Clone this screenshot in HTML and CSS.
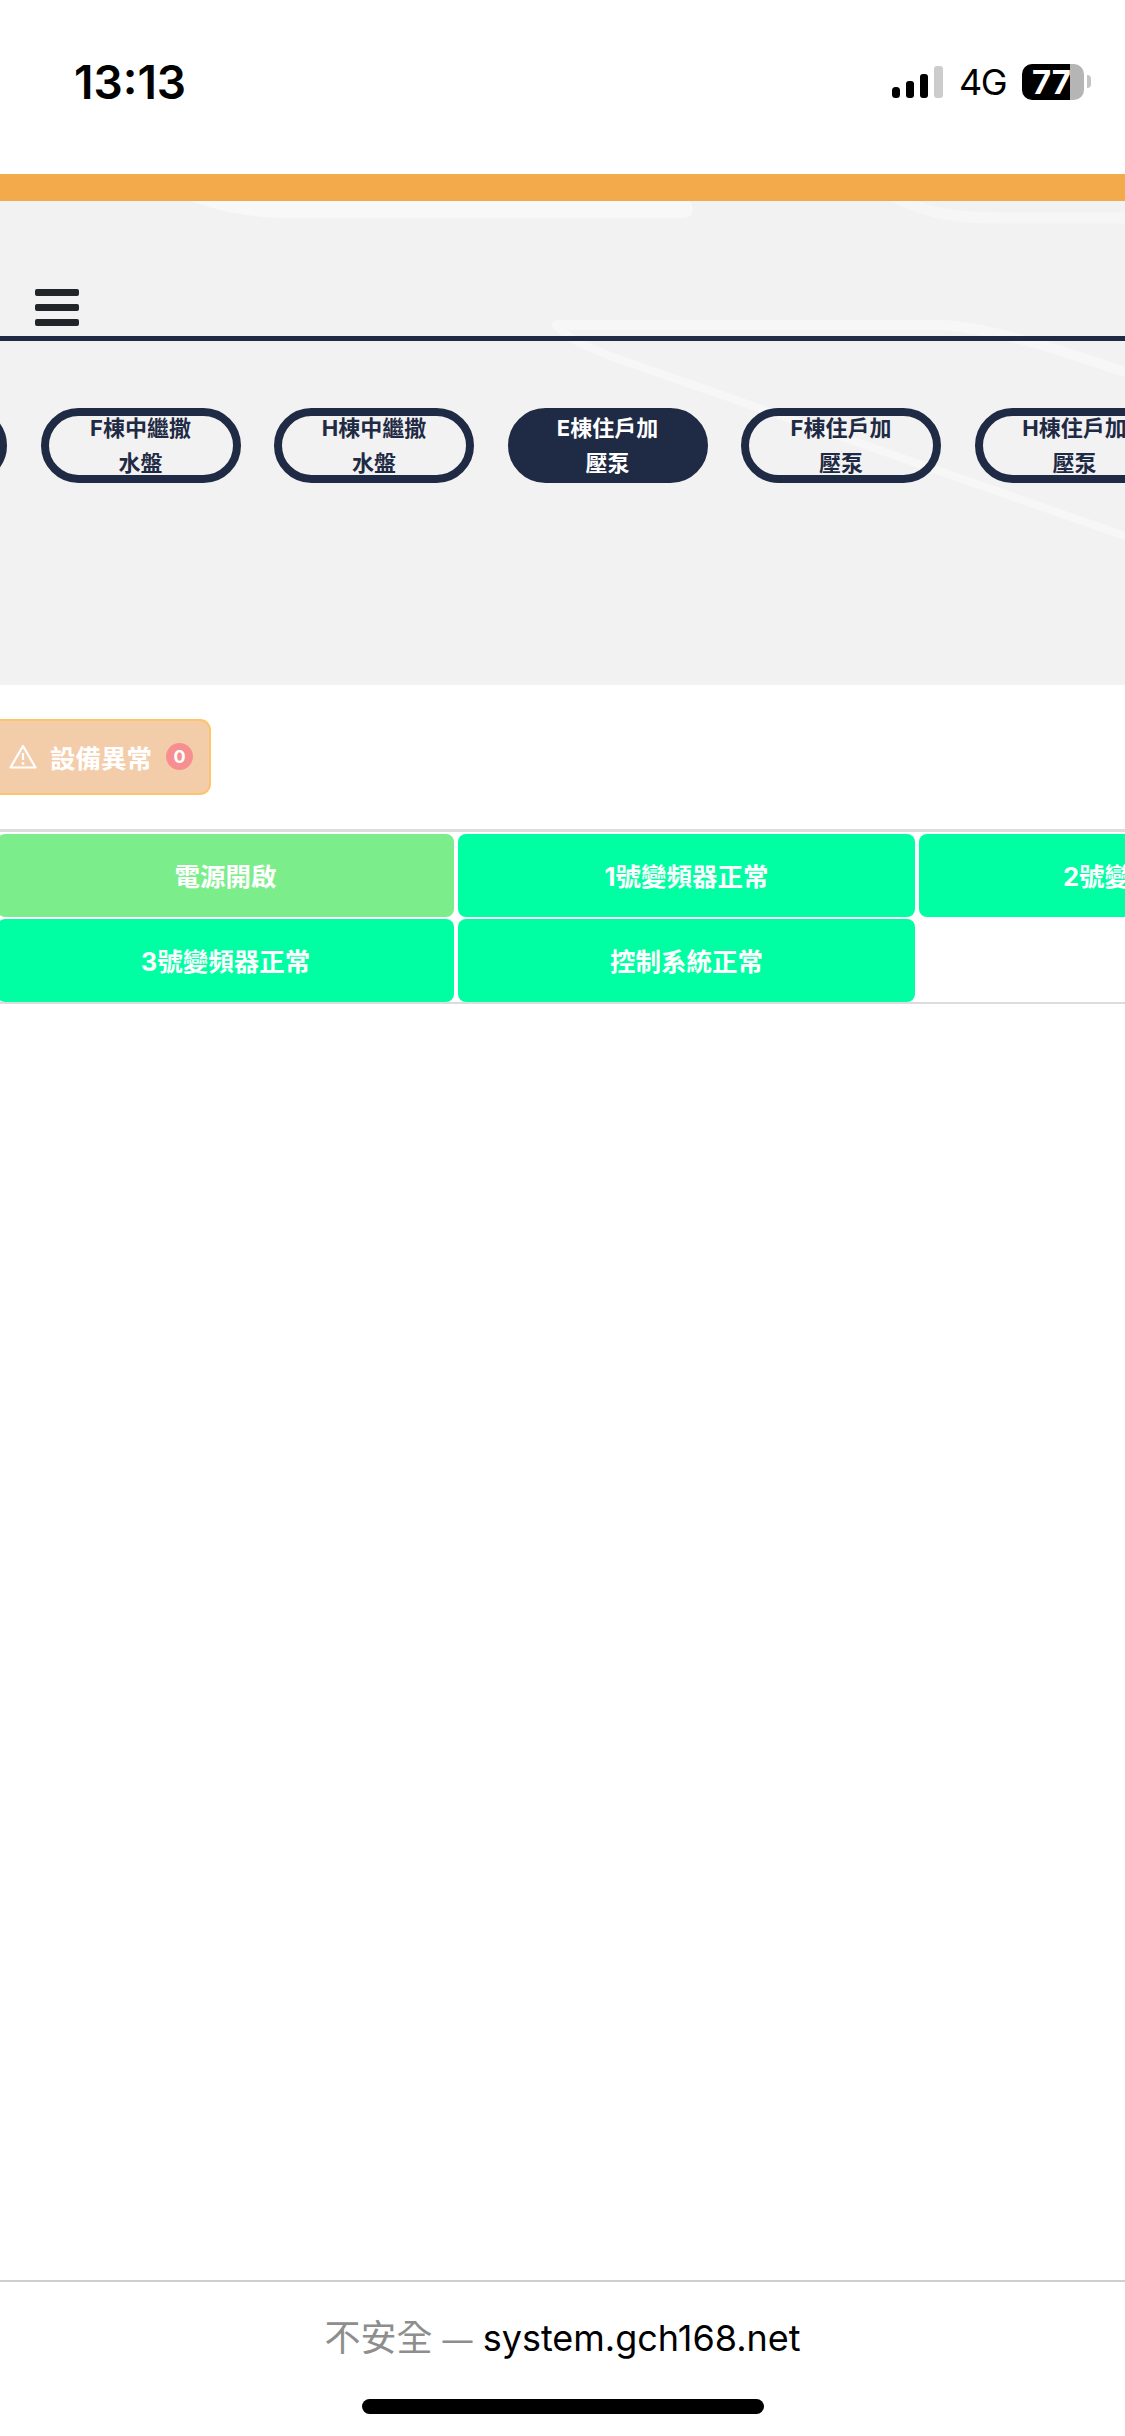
FILE: index.html
```html
<!DOCTYPE html>
<html>
<head>
  <title>設備狀態</title>
  <link rel="stylesheet" href="styles.css">
</head>
<body>
  <div class="status-bar">
    <span class="status-time">13:13</span>
    <div class="status-right">
      <svg class="signal" width="51" height="32" viewBox="0 0 51 32">
        <rect x="0" y="21" width="8" height="11" rx="3.5" fill="#000"/>
        <rect x="14" y="15" width="8" height="17" rx="3" fill="#000"/>
        <rect x="28" y="8" width="8" height="24" rx="3" fill="#000"/>
        <rect x="42" y="0" width="9" height="32" rx="3" fill="#ccc"/>
      </svg>
      <span class="status-net">4G</span>
      <div class="battery">77</div>
    </div>
  </div>

  <div class="orange-bar"></div>

  <div class="top-section">
    <!-- light lines behind the menu -->
    <svg class="top-lines" viewBox="0 201 1125 484" width="1125" height="484">
      <path d="M190 201 C230 215 262 218 292 218 H680 Q696 218 692 206 L690 201 Z" fill="#f8f8f8"/>
      <path d="M895 197 C930 215 960 218 1000 218 H1125" fill="none" stroke="#f6f6f6" stroke-width="11"/>
      <path d="M557 325 H945 C1000 330 1060 350 1125 372" fill="none" stroke="#f7f7f7" stroke-width="10" stroke-linecap="round"/>
      <path d="M557 325 C570 342 590 347 610 356 L1125 536" fill="none" stroke="#f7f7f7" stroke-width="8" stroke-linecap="round"/>
    </svg>

    <div class="nav">
      <div class="menu-btn">
        <span></span>
        <span></span>
        <span></span>
      </div>
    </div>

    <div class="tabs">
      <div class="tab">E棟中繼撒水盤</div>
      <div class="tab">F棟中繼撒水盤</div>
      <div class="tab">H棟中繼撒水盤</div>
      <div class="tab tab-active">E棟住戶加壓泵</div>
      <div class="tab">F棟住戶加壓泵</div>
      <div class="tab">H棟住戶加壓泵</div>
    </div>
  </div>

  <div class="main">
    <div class="alert">
      <svg class="alert-icon" width="28" height="25" viewBox="0 0 28 25">
        <path d="M14 2 L26.5 23.5 H1.5 Z" fill="none" stroke="#fff" stroke-width="2.2" stroke-linejoin="round"/>
        <path d="M14 9 V16" stroke="#fff" stroke-width="2.2"/>
        <circle cx="14" cy="19.5" r="1.4" fill="#fff"/>
      </svg>
      <span class="alert-text">設備異常</span>
      <span class="alert-count">0</span>
    </div>

    <div class="state-table">
      <div class="state-cell state-power">電源開啟</div>
      <div class="state-cell">1號變頻器正常</div>
      <div class="state-cell">2號變頻器正常</div>
      <div class="state-cell">3號變頻器正常</div>
      <div class="state-cell">控制系統正常</div>
    </div>
  </div>

  <div class="url-bar">
    <div class="url-text"><span class="url-warn">不安全 <span class="url-dash">—</span> </span>system.gch168.net</div>
    <div class="home-line"></div>
  </div>
</body>
</html>
```

FILE: styles.css
```css
* {
  box-sizing: border-box;
}

html, body {
  margin: 0;
  padding: 0;
}

body {
  width: 1125px;
  height: 2436px;
  overflow: hidden;
  display: flex;
  flex-direction: column;
  background-color: #fff;
  font-family: Inter, "Noto Sans CJK TC", sans-serif;
}

/* phone status bar */
.status-bar {
  height: 174px;
  flex-shrink: 0;
  padding: 0 41px 10px 74px;
  display: flex;
  align-items: center;
  justify-content: space-between;
  color: #000;
}

.status-time {
  font-size: 46px;
  font-weight: 600;
}

.status-right {
  display: flex;
  align-items: center;
}

.status-net {
  font-size: 36px;
  letter-spacing: -1.5px;
  margin-left: 16px;
  line-height: 36px;
}

.battery {
  position: relative;
  width: 62px;
  height: 36px;
  margin-left: 16px;
  border-radius: 10px;
  background: linear-gradient(90deg, #000 48px, #b5b5b5 48px);
  color: #fff;
  font-size: 33px;
  font-weight: 700;
  line-height: 36px;
  padding-left: 10px;
  white-space: nowrap;
}

.battery::after {
  content: "";
  position: absolute;
  left: 65px;
  top: 11px;
  width: 4px;
  height: 13px;
  border-radius: 0 6px 6px 0;
  background-color: #c4c4c4;
}

.orange-bar {
  height: 27px;
  flex-shrink: 0;
  background-color: #f3aa4b;
}

/* grey section with menu and tabs */
.top-section {
  position: relative;
  height: 484px;
  flex-shrink: 0;
  overflow: hidden;
  background-color: #f2f2f2;
}

.top-lines {
  position: absolute;
  left: 0;
  top: 0;
}

.nav {
  position: relative;
  padding: 88px 0 10px 35px;
  border-bottom: 5px solid #1f2a44;
}

.menu-btn {
  display: flex;
  flex-direction: column;
  gap: 8px;
}

.menu-btn span {
  width: 44px;
  height: 7px;
  border-radius: 2px;
  background-color: #212529;
}

.tabs {
  position: relative;
  display: flex;
  gap: 33.5px;
  margin: 67px 0 0 -193px;
}

.tab {
  width: 200px;
  height: 75px;
  flex-shrink: 0;
  padding: 0 38px;
  border: 8px solid #1f2a44;
  border-radius: 38px;
  display: flex;
  align-items: center;
  justify-content: center;
  text-align: center;
  color: #1f2a44;
  font-size: 22px;
  font-weight: 700;
  line-height: 35px;
}

.tab-active {
  background-color: #1f2a44;
  color: #fff;
}

.main {
  flex: 1;
  overflow: hidden;
}

.alert {
  width: 211px;
  height: 76px;
  margin-top: 34px;
  padding: 0 0 2px 9px;
  display: flex;
  align-items: center;
  background-color: #f3cda9;
  border: 2px solid #fdc56b;
  border-left: none;
  border-radius: 0 11px 11px 0;
  color: #fff;
}

.alert-text {
  margin-left: 13px;
  font-size: 25.5px;
  font-weight: 700;
}

.alert-count {
  width: 27px;
  height: 27px;
  margin-left: 14px;
  border-radius: 50%;
  background-color: #f78f91;
  font-size: 18px;
  font-weight: 700;
  line-height: 27px;
  text-align: center;
}

/* device state cells, 3 per row */
.state-table {
  width: 1400px;
  margin: 34px 0 0 -3px;
  padding-top: 2px;
  display: grid;
  grid-template-columns: repeat(3, 457px);
  grid-auto-rows: 83px;
  gap: 2px 4px;
  border-top: 3px solid #dcdcdc;
  border-bottom: 2px solid #dcdcdc;
}

.state-cell {
  display: flex;
  align-items: center;
  justify-content: center;
  padding-bottom: 2px;
  border-radius: 8px;
  background-color: #00ffa3;
  color: #fff;
  font-size: 25.5px;
  font-weight: 700;
}

.state-power {
  background-color: #7ced8b;
}

/* browser address bar */
.url-bar {
  height: 156px;
  flex-shrink: 0;
  border-top: 2px solid #cfcfcf;
  display: flex;
  flex-direction: column;
  align-items: center;
}

.url-text {
  margin-top: 34px;
  font-size: 36px;
  line-height: 44px;
  color: #000;
}

.url-warn {
  color: #8e8e8e;
}

.url-dash {
  font-size: 30px;
}

.home-line {
  width: 402px;
  height: 15px;
  margin-top: 37px;
  border-radius: 8px;
  background-color: #000;
}
```
